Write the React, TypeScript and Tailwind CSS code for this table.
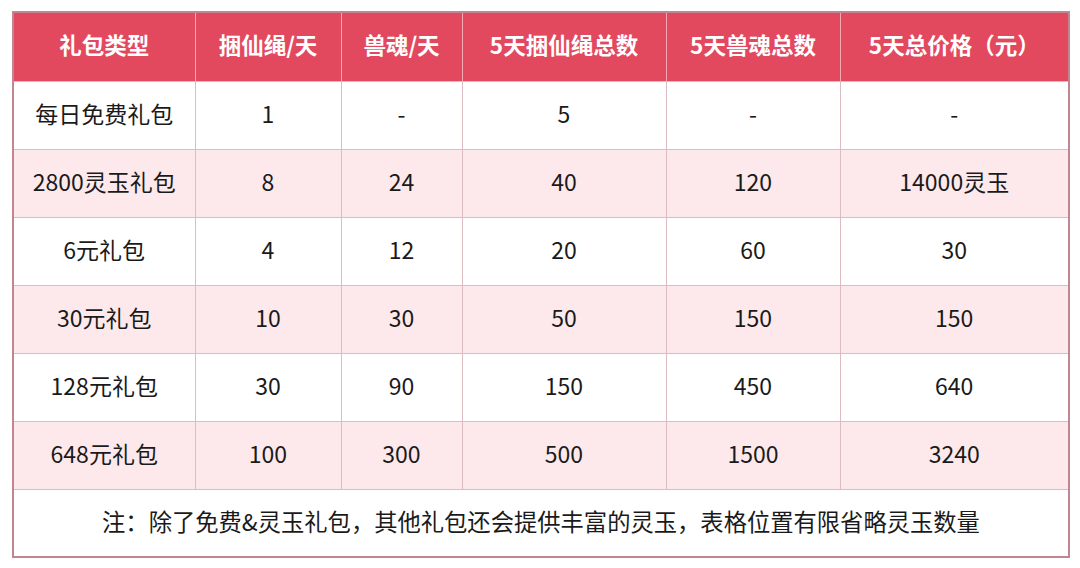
import React from "react";

const headers = ["礼包类型", "捆仙绳/天", "兽魂/天", "5天捆仙绳总数", "5天兽魂总数", "5天总价格（元）"];
const rows = [
  ["每日免费礼包", "1", "-", "5", "-", "-"],
  ["2800灵玉礼包", "8", "24", "40", "120", "14000灵玉"],
  ["6元礼包", "4", "12", "20", "60", "30"],
  ["30元礼包", "10", "30", "50", "150", "150"],
  ["128元礼包", "30", "90", "150", "450", "640"],
  ["648元礼包", "100", "300", "500", "1500", "3240"],
];
const widths = ["w-[182px]", "w-[146px]", "w-[121px]", "w-[204px]", "w-[174px]", "w-[229px]"];

export default function App() {
  return (
    <div className="w-[1080px] h-[568px] bg-white pt-[11px] pl-[12px]" style={{ fontFamily: '"Noto Sans CJK SC", "Noto Sans", sans-serif' }}>
      <table className="border-collapse table-fixed w-[1057px] border-2 border-[#c08793]">
        <colgroup>
          {widths.map((w, i) => (
            <col key={i} className={w} />
          ))}
        </colgroup>
        <thead>
          <tr className="h-[69px] bg-[#e3495e]">
            {headers.map((h, i) => (
              <th key={i} className="text-white font-bold text-[22.5px] text-center border-r border-[#f2a9b3] last:border-r-0 p-0 pb-[4px]">
                {h}
              </th>
            ))}
          </tr>
        </thead>
        <tbody>
          {rows.map((r, ri) => (
            <tr key={ri} className={`h-[68px] ${ri % 2 === 1 ? "bg-[#fde9eb]" : "bg-white"}`}>
              {r.map((c, ci) => (
                <td key={ci} className="text-center text-[23px] text-[#1a1a1a] border border-[#dcbcc1] p-0 pb-[3px]">
                  {c}
                </td>
              ))}
            </tr>
          ))}
          <tr className="h-[68px] bg-white">
            <td colSpan={6} className="text-center text-[23.3px] text-[#1a1a1a] border border-[#dcbcc1] p-0 pb-[3px]">
              注：除了免费&amp;灵玉礼包，其他礼包还会提供丰富的灵玉，表格位置有限省略灵玉数量
            </td>
          </tr>
        </tbody>
      </table>
    </div>
  );
}
